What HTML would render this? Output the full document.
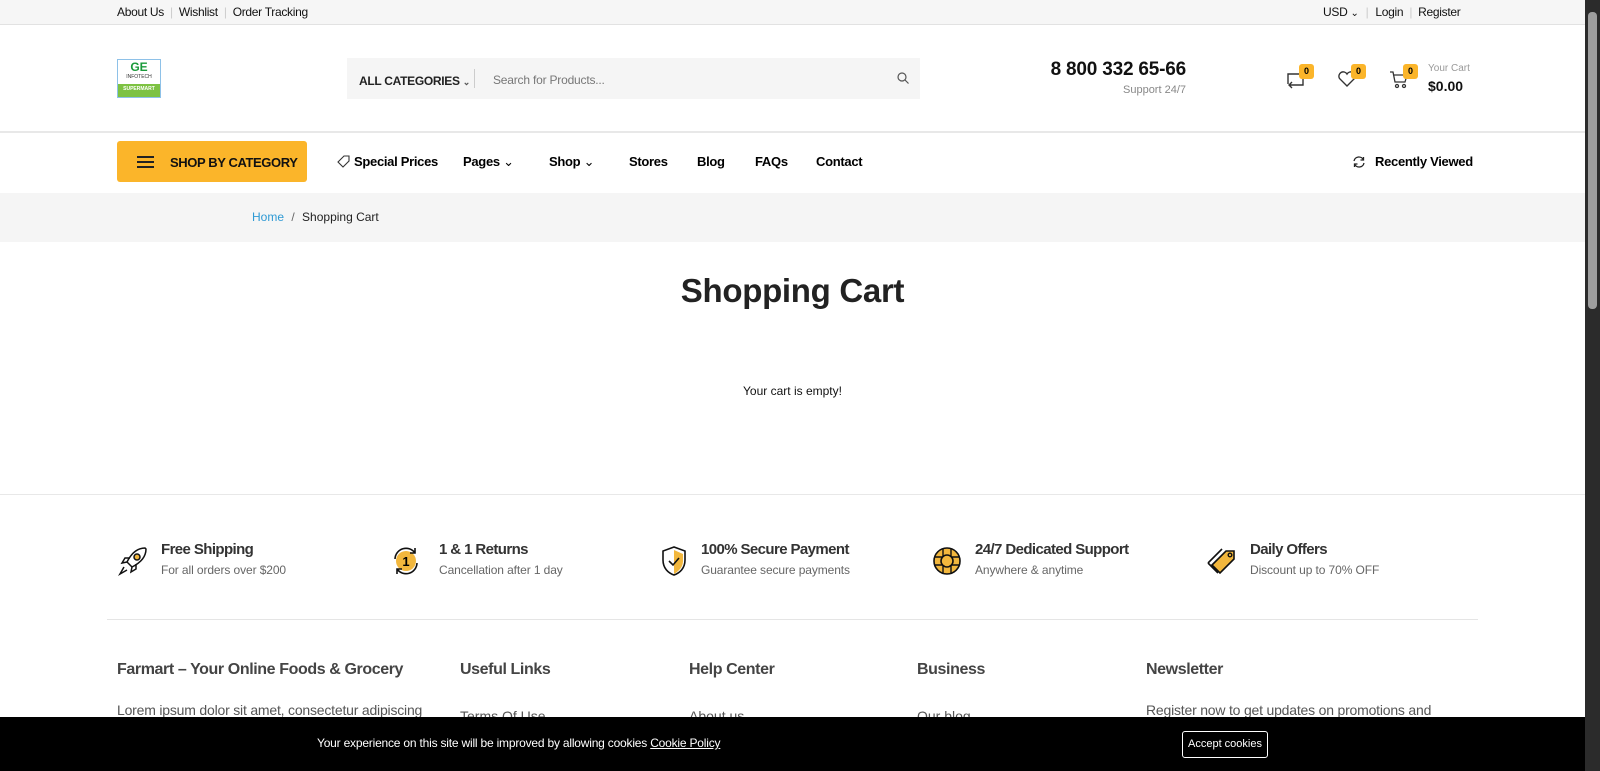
<!DOCTYPE html>
<html><head><meta charset="utf-8"><style>
*{box-sizing:border-box;margin:0;padding:0}
body{width:1600px;height:771px;overflow:hidden;font-family:"Liberation Sans",sans-serif;color:#000;background:#fff;position:relative}
.a{position:absolute;white-space:nowrap}
.sb{position:absolute;left:1585px;top:0;width:15px;height:771px;background:#2b2b2b}
.sb .t{position:absolute;left:3px;top:12px;width:9px;height:297px;background:#9e9e9e;border-radius:4px}
.badge{position:absolute;width:15px;height:15px;background:#fbb52a;border-radius:3px;font-size:9px;font-weight:bold;text-align:center;line-height:15px}
.ft{font-size:15px;color:#333;font-weight:bold;letter-spacing:-.6px}
.fs{font-size:12px;color:#666;letter-spacing:-.1px}
.fh{font-size:16px;color:#444;font-weight:bold;letter-spacing:-.4px}
.nav{font-size:13px;font-weight:bold;top:154px;letter-spacing:-.3px}
</style></head><body>
<div class="a" style="left:0;top:0;width:1585px;height:25px;background:#f6f6f6;border-bottom:1px solid #e2e2e2"></div>
<div class="a" style="left:117px;top:5px;font-size:12px;color:#111;letter-spacing:-.3px">About Us <span style="color:#ccc;margin:0 3px">|</span> Wishlist <span style="color:#ccc;margin:0 3px">|</span> Order Tracking</div>
<div class="a" style="left:1323px;top:5px;font-size:12px;color:#111;letter-spacing:-.3px">USD <span style="font-size:10px">&#8964;</span><span style="color:#ccc;margin:0 7px">|</span>Login <span style="color:#ccc;margin:0 3px">|</span> Register</div>

<div class="a" style="left:117px;top:59px;width:44px;height:39px;border:1px solid #8ec1e8;background:#fff">
<div style="text-align:center;font-size:12px;font-weight:bold;color:#1a9a3a;line-height:14px">GE</div>
<div style="text-align:center;font-size:5px;color:#333">INFOTECH</div>
<div style="position:absolute;left:0;right:0;bottom:0;height:13px;background:#7dc242;font-size:5px;color:#fff;font-weight:bold;text-align:center;line-height:10px">SUPERMART</div></div>

<div class="a" style="left:347px;top:58px;width:573px;height:41px;background:#f5f5f5"></div>
<div class="a" style="left:359px;top:74px;font-size:12px;font-weight:bold;color:#222;letter-spacing:-.3px">ALL CATEGORIES <span style="font-size:9px;color:#555">&#8964;</span></div>
<div class="a" style="left:474px;top:69px;width:1px;height:19px;background:#ccc"></div>
<div class="a" style="left:493px;top:73px;font-size:12px;color:#777;letter-spacing:-.2px">Search for Products...</div>
<svg class="a" style="left:897px;top:72px" width="12" height="12" viewBox="0 0 12 12"><circle cx="5" cy="5" r="4" fill="none" stroke="#555" stroke-width="1.2"/><path d="M8 8l3.5 3.5" stroke="#555" stroke-width="1.2"/></svg>

<div class="a" style="left:1030px;top:59px;width:156px;text-align:right;font-size:19px;font-weight:bold;color:#111;letter-spacing:-.2px">8 800 332 65-66</div>
<div class="a" style="left:1080px;top:84px;width:106px;text-align:right;font-size:11px;color:#888">Support 24/7</div>

<svg class="a" style="left:1286px;top:70px" width="20" height="20" viewBox="0 0 20 20" fill="none" stroke="#333" stroke-width="1.4"><path d="M2 14V4h15M17 6v9H4M6 12l-3 3 3 3"/></svg>
<div class="badge" style="left:1299px;top:64px">0</div>
<svg class="a" style="left:1337px;top:70px" width="20" height="18" viewBox="0 0 20 18"><path d="M10 16L2.5 8.5A4 4 0 0 1 10 4a4 4 0 0 1 7.5 4.5z" fill="none" stroke="#333" stroke-width="1.4"/></svg>
<div class="badge" style="left:1351px;top:64px">0</div>
<svg class="a" style="left:1389px;top:70px" width="20" height="20" viewBox="0 0 20 20" fill="none" stroke="#333" stroke-width="1.3"><path d="M1 2h3l2 10h10l2-7H5"/><circle cx="8" cy="16" r="1.5"/><circle cx="15" cy="16" r="1.5"/></svg>
<div class="badge" style="left:1403px;top:64px">0</div>
<div class="a" style="left:1428px;top:63px;font-size:10px;color:#999">Your Cart</div>
<div class="a" style="left:1428px;top:78px;font-size:14px;font-weight:bold;color:#111">$0.00</div>

<div class="a" style="left:0;top:131px;width:1585px;height:2px;background:#e8e8e8"></div>
<div class="a" style="left:117px;top:141px;width:190px;height:41px;background:#fbb52a;border-radius:3px"></div>
<div class="a" style="left:137px;top:156px;width:17px;height:2px;background:#222;box-shadow:0 5px 0 #222,0 10px 0 #222"></div>
<div class="a" style="left:170px;top:155px;font-size:13px;font-weight:bold;color:#111;letter-spacing:-.4px">SHOP BY CATEGORY</div>
<svg class="a" style="left:337px;top:155px" width="13" height="13" viewBox="0 0 13 13"><path d="M1 7L7 1h5v5l-6 6z" fill="none" stroke="#333" stroke-width="1.1"/></svg>
<div class="a nav" style="left:354px">Special Prices</div>
<div class="a nav" style="left:463px">Pages <span style="font-weight:normal">&#8964;</span></div>
<div class="a nav" style="left:549px">Shop <span style="font-weight:normal">&#8964;</span></div>
<div class="a nav" style="left:629px">Stores</div>
<div class="a nav" style="left:697px">Blog</div>
<div class="a nav" style="left:755px">FAQs</div>
<div class="a nav" style="left:816px">Contact</div>
<svg class="a" style="left:1352px;top:155px" width="14" height="14" viewBox="0 0 14 14" fill="none" stroke="#222" stroke-width="1.3"><path d="M2 6a5 5 0 0 1 9.5-1M12 8a5 5 0 0 1-9.5 1M11.5 2v3h-3M2.5 12V9h3"/></svg>
<div class="a nav" style="left:1375px">Recently Viewed</div>

<div class="a" style="left:0;top:193px;width:1585px;height:49px;background:#f5f5f5"></div>
<div class="a" style="left:252px;top:210px;font-size:12px;color:#222"><span style="color:#2f9ad4">Home</span> <span style="color:#666;margin:0 4px">/</span> Shopping Cart</div>

<div class="a" style="left:0;top:272px;width:1585px;text-align:center;font-size:33px;font-weight:bold;color:#222;letter-spacing:-.3px">Shopping Cart</div>
<div class="a" style="left:0;top:384px;width:1585px;text-align:center;font-size:12px;color:#111">Your cart is empty!</div>

<div class="a" style="left:0;top:494px;width:1585px;height:1px;background:#e8e8e8"></div>

<svg class="a" style="left:117px;top:545px" width="32" height="32" viewBox="0 0 32 32" fill="none" stroke="#111" stroke-width="1.5"><path d="M28 3c-8 0-14 6-18 14l5 5c8-4 14-10 14-18z"/><circle cx="20" cy="12" r="3" fill="#f2b73d"/><path d="M10 17l-5 1 3-5h5M15 22l-1 5 5-3v-5M7 22l-4 7 7-4"/></svg>
<div class="a ft" style="left:161px;top:541px">Free Shipping</div><div class="a fs" style="left:161px;top:563px">For all orders over $200</div>
<svg class="a" style="left:389px;top:545px" width="34" height="32" viewBox="0 0 34 32"><circle cx="17" cy="16" r="10" fill="#f2b73d"/><path d="M6 14a11 11 0 0 1 20-6M28 18a11 11 0 0 1-20 6M26 3v5h-5M8 29v-5h5" fill="none" stroke="#111" stroke-width="1.6"/><text x="17" y="21" font-size="13" text-anchor="middle" font-family="Liberation Sans" font-weight="bold">1</text></svg>
<div class="a ft" style="left:439px;top:541px">1 &amp; 1 Returns</div><div class="a fs" style="left:439px;top:563px">Cancellation after 1 day</div>
<svg class="a" style="left:660px;top:545px" width="28" height="32" viewBox="0 0 28 32"><path d="M14 5l9 4v7c0 6-4 10-9 13z" fill="#f2b73d"/><path d="M14 2L3 6v9c0 8 5 13 11 15 6-2 11-7 11-15V6z" fill="none" stroke="#111" stroke-width="1.6"/><path d="M9 16l4 4 6-7" fill="none" stroke="#111" stroke-width="1.6"/></svg>
<div class="a ft" style="left:701px;top:541px">100% Secure Payment</div><div class="a fs" style="left:701px;top:563px">Guarantee secure payments</div>
<svg class="a" style="left:931px;top:545px" width="32" height="32" viewBox="0 0 32 32"><circle cx="16" cy="16" r="13" fill="#f2b73d" stroke="#111" stroke-width="1.6"/><circle cx="16" cy="16" r="6" fill="#f2b73d" stroke="#111" stroke-width="1.6"/><path d="M12 4v8M20 4v8M12 20v8M20 20v8M4 12h8M4 20h8M20 12h8M20 20h8" stroke="#111" stroke-width="1.4"/></svg>
<div class="a ft" style="left:975px;top:541px">24/7 Dedicated Support</div><div class="a fs" style="left:975px;top:563px">Anywhere &amp; anytime</div>
<svg class="a" style="left:1204px;top:545px" width="36" height="32" viewBox="0 0 36 32"><path d="M8 20L22 6h8v8L16 28z" fill="#f2b73d" stroke="#111" stroke-width="1.6"/><path d="M4 18L18 4" stroke="#111" stroke-width="1.6"/><path d="M4 18l10 10" stroke="#111" stroke-width="1.6"/><circle cx="26" cy="10" r="1.8" fill="none" stroke="#111" stroke-width="1.4"/></svg>
<div class="a ft" style="left:1250px;top:541px">Daily Offers</div><div class="a fs" style="left:1250px;top:563px">Discount up to 70% OFF</div>

<div class="a" style="left:107px;top:619px;width:1371px;height:1px;background:#e5e5e5"></div>
<div class="a fh" style="left:117px;top:661px">Farmart – Your Online Foods &amp; Grocery</div>
<div class="a fh" style="left:460px;top:661px">Useful Links</div>
<div class="a fh" style="left:689px;top:661px">Help Center</div>
<div class="a fh" style="left:917px;top:661px">Business</div>
<div class="a fh" style="left:1146px;top:661px">Newsletter</div>
<div class="a" style="left:117px;top:702px;font-size:14px;color:#555;letter-spacing:-.2px">Lorem ipsum dolor sit amet, consectetur adipiscing</div>
<div class="a" style="left:460px;top:708px;font-size:14px;color:#555">Terms Of Use</div>
<div class="a" style="left:689px;top:708px;font-size:14px;color:#555">About us</div>
<div class="a" style="left:917px;top:708px;font-size:14px;color:#555">Our blog</div>
<div class="a" style="left:1146px;top:702px;font-size:14px;color:#555;letter-spacing:-.2px">Register now to get updates on promotions and</div>

<div class="a" style="left:0;top:717px;width:1585px;height:54px;background:#000"></div>
<div class="a" style="left:317px;top:736px;font-size:12px;color:#fff;letter-spacing:-.2px">Your experience on this site will be improved by allowing cookies <span style="text-decoration:underline">Cookie Policy</span></div>
<div class="a" style="left:1182px;top:731px;width:86px;height:27px;border:1px solid #fff;border-radius:3px;color:#fff;font-size:11px;text-align:center;line-height:25px">Accept cookies</div>

<div class="sb"><div class="t"></div></div>
</body></html>
